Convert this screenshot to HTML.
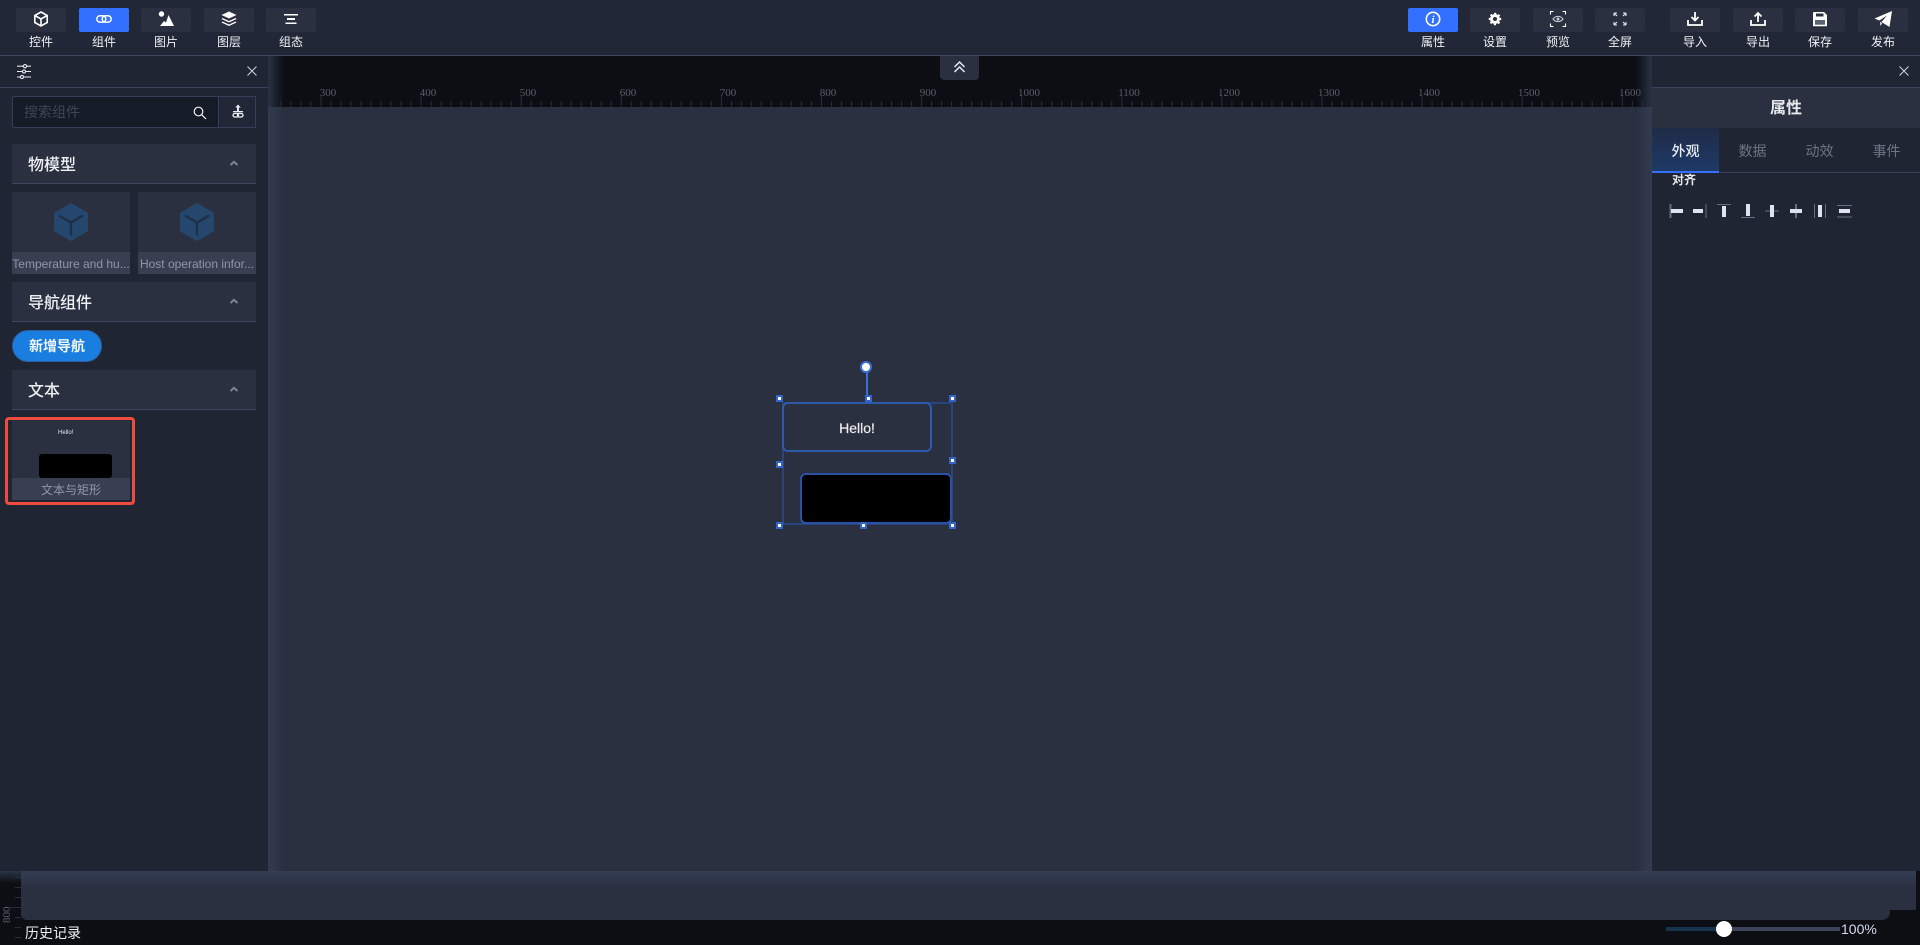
<!DOCTYPE html>
<html><head><meta charset="utf-8"><title>组态</title>
<style>
*{box-sizing:border-box;margin:0;padding:0}
html,body{width:1920px;height:945px;overflow:hidden;background:#0c0e14;font-family:"Liberation Sans","Noto Sans CJK SC",sans-serif;color:#fff}
.a{position:absolute}
#canvas{left:21px;top:107px;width:1895px;height:803px;background:#2a3040}
#canvasb{left:21px;top:900px;width:1869px;height:20px;background:#2a3040;border-radius:0 0 8px 6px}
#top{left:0;top:0;width:1920px;height:56px;background:#212736;border-bottom:1px solid #3c4760}
.btn{position:absolute;top:8px;width:50px;height:24px;background:#2a3040;border-radius:2px}
.btn.on{background:#3370ff}
.btn svg{position:absolute;left:13px;top:-1px;width:24px;height:24px}
.lb{position:absolute;top:34px;width:50px;text-align:center;font-size:12px;line-height:17px;color:#f0f2f5}
.panel{background:#1f2533;top:56px;height:815px}
.line{position:absolute;height:1px;background:#39445c}
.sec{position:absolute;left:12px;width:244px;height:40px;background:#2a3040;border-bottom:1px solid #3c4760;font-size:16px;line-height:43px;padding-left:16px;color:#eef0f4;font-weight:500}
.sec svg{position:absolute;left:217px;top:15px}
.card{position:absolute;width:118px;height:82px;background:#2a3040}
.cap{position:absolute;left:0;bottom:0;width:100%;height:22px;background:#393f50;color:#8f97ab;font-size:12px;line-height:24px;text-align:center;white-space:nowrap;overflow:hidden}
.tab{position:absolute;top:128px;width:67px;height:44px;text-align:center;font-size:14px;line-height:46px;color:#6d7482}
.h{position:absolute;width:7px;height:7px;background:#fff;border:2px solid #3565c8}
</style></head><body>

<div class="a" id="canvas"></div><div class="a" id="canvasb"></div>
<div class="a" style="left:21px;top:871px;width:1895px;height:16px;background:linear-gradient(#343e54,#2a3040)"></div>

<!-- ruler -->
<div class="a" style="left:268px;top:56px;width:1384px;height:51px;background:#0c0e14"></div>
<svg class="a" style="left:268px;top:56px" width="1384" height="51">
<defs><pattern id="r" patternUnits="userSpaceOnUse" x="52.5" y="0" width="100.1" height="51">
<rect x="0" y="40" width="1" height="11" fill="#292d39"/><rect x="10" y="45" width="1" height="6" fill="#292d39"/><rect x="20" y="45" width="1" height="6" fill="#292d39"/><rect x="30" y="45" width="1" height="6" fill="#292d39"/><rect x="40" y="45" width="1" height="6" fill="#292d39"/><rect x="50" y="45" width="1" height="6" fill="#292d39"/><rect x="60" y="45" width="1" height="6" fill="#292d39"/><rect x="70" y="45" width="1" height="6" fill="#292d39"/><rect x="80" y="45" width="1" height="6" fill="#292d39"/><rect x="90" y="45" width="1" height="6" fill="#292d39"/>
</pattern></defs>
<rect width="1384" height="51" fill="url(#r)"/>
<g font-family="'Liberation Serif',serif" font-size="11" fill="#5c5f67" text-anchor="middle">
<text x="60" y="40">300</text><text x="160" y="40">400</text><text x="260" y="40">500</text><text x="360" y="40">600</text><text x="460" y="40">700</text><text x="560" y="40">800</text><text x="660" y="40">900</text><text x="761" y="40">1000</text><text x="861" y="40">1100</text><text x="961" y="40">1200</text><text x="1061" y="40">1300</text><text x="1161" y="40">1400</text><text x="1261" y="40">1500</text><text x="1362" y="40">1600</text>
</g></svg>
<div class="a" style="left:268px;top:56px;width:16px;height:51px;background:linear-gradient(90deg,#2a3244,rgba(12,14,20,0))"></div>
<div class="a" style="left:1636px;top:56px;width:16px;height:51px;background:linear-gradient(90deg,rgba(12,14,20,0),#2a3244)"></div>
<div class="a" style="left:268px;top:107px;width:16px;height:764px;background:linear-gradient(90deg,#323b50,#2a3040)"></div>
<div class="a" style="left:1636px;top:107px;width:16px;height:764px;background:linear-gradient(90deg,#2a3040,#323b50)"></div>
<!-- left ruler ticks -->
<svg class="a" style="left:0;top:871px" width="21" height="74">
<g fill="#292d39"><rect x="15" y="6" width="6" height="1"/><rect x="15" y="16" width="6" height="1"/><rect x="15" y="26" width="6" height="1"/><rect x="10" y="36" width="11" height="1"/><rect x="15" y="46" width="6" height="1"/><rect x="15" y="56" width="6" height="1"/><rect x="15" y="66" width="6" height="1"/></g>
<text transform="translate(10,52) rotate(-90)" font-family="'Liberation Serif',serif" font-size="11" fill="#5c5f67">800</text></svg>
<div class="a" style="left:0;top:871px;width:21px;height:12px;background:linear-gradient(#2a3244,rgba(12,14,20,0))"></div>

<!-- collapse -->
<div class="a" style="left:940px;top:56px;width:39px;height:24px;background:#2a3040;border-radius:0 0 4px 4px">
<svg width="39" height="24" fill="none" stroke="#e4e8f0" stroke-width="1.5"><path d="M14.500 11l5-5 5 5M14.500 16l5-5 5 5"/></svg></div>

<!-- top bar -->
<div class="a" id="top">
<div class="btn" style="left:16px"><svg viewBox="0 0 24 24" fill="none" stroke="#fff" stroke-width="1.6"><path d="M12 5l6.200 3.500v7L12 19l-6.200-3.500v-7zM5.800 8.500L12 12l6.200-3.500M12 12v7"/></svg></div><div class="lb" style="left:16px">控件</div>
<div class="btn on" style="left:79px"><svg viewBox="0 0 24 24" fill="none" stroke="#fff" stroke-width="1.500"><rect x="4.800" y="8.800" width="9" height="6.400" rx="3.200"/><rect x="10.200" y="8.800" width="9" height="6.400" rx="3.200"/></svg></div><div class="lb" style="left:79px">组件</div>
<div class="btn" style="left:141px"><svg viewBox="0 0 24 24" fill="#fff"><circle cx="7.500" cy="7" r="2.700"/><path d="M6 19l4-5 2 1.500L14.500 8 20 19z"/></svg></div><div class="lb" style="left:141px">图片</div>
<div class="btn" style="left:204px"><svg viewBox="0 0 24 24" fill="#fff"><path d="M12 4.500l7.500 3.500L12 11.500 4.500 8z"/><path d="M5.500 11L12 14l6.500-3 1 1L12 15.500 4.500 12zM5.500 14.500L12 17.500l6.500-3 1 1L12 19 4.500 15.500z"/></svg></div><div class="lb" style="left:204px">图层</div>
<div class="btn" style="left:266px"><svg viewBox="0 0 24 24" fill="#fff"><rect x="5" y="7" width="14" height="1.500"/><rect x="8" y="11" width="8" height="2"/><rect x="6.500" y="15.500" width="11" height="1.500"/></svg></div><div class="lb" style="left:266px">组态</div>

<div class="btn on" style="left:1408px"><svg viewBox="0 0 24 24" fill="none"><circle cx="12" cy="12" r="6.700" stroke="#fff" stroke-width="1.600"/><text x="12" y="16" text-anchor="middle" font-family="'Liberation Serif',serif" font-style="italic" font-weight="700" font-size="11" fill="#fff">i</text></svg></div><div class="lb" style="left:1408px">属性</div>
<div class="btn" style="left:1470px"><svg viewBox="0 0 24 24" fill="none" stroke="#fff"><circle cx="12" cy="12" r="3.500" stroke-width="3"/><circle cx="12" cy="12" r="5.500" stroke-width="1.500" stroke-dasharray="2.160 2.160" transform="rotate(-11 12 12)"/></svg></div><div class="lb" style="left:1470px">设置</div>
<div class="btn" style="left:1533px"><svg viewBox="0 0 24 24" fill="none" stroke="#fff" stroke-width="1.100"><path d="M4.500 7.500V4.500h3M16.500 4.500h3v3M19.500 16.500v3h-3M7.500 19.500h-3v-3"/><path d="M7 12c2.500-3.500 7.500-3.500 10 0-2.500 3.500-7.500 3.500-10 0z" stroke="#c9cdd6"/><circle cx="12" cy="12" r="1.500" fill="#c9cdd6" stroke="none"/></svg></div><div class="lb" style="left:1533px">预览</div>
<div class="btn" style="left:1595px"><svg viewBox="0 0 24 24" fill="none" stroke="#e8eaf0" stroke-width="1.100"><path d="M6 6h3M6 6v3M6 6l3 3M18 6h-3M18 6v3M18 6l-3 3M6 18h3M6 18v-3M6 18l3-3M18 18h-3M18 18v-3M18 18l-3-3"/></svg></div><div class="lb" style="left:1595px">全屏</div>
<div class="btn" style="left:1670px"><svg viewBox="0 0 24 24" fill="none" stroke="#fff" stroke-width="1.800"><path d="M5 13v5h14v-5"/><path d="M12 5v8M8.500 10l3.500 3.500 3.500-3.500"/></svg></div><div class="lb" style="left:1670px">导入</div>
<div class="btn" style="left:1733px"><svg viewBox="0 0 24 24" fill="none" stroke="#fff" stroke-width="1.800"><path d="M5 13v5h14v-5"/><path d="M12 15V6M8.500 9.500L12 6l3.500 3.500"/></svg></div><div class="lb" style="left:1733px">导出</div>
<div class="btn" style="left:1795px"><svg viewBox="0 0 24 24"><path fill="#fff" d="M6 5h10l3 3v10.500a.8.8 0 01-.8.800H5.800a.8.8 0 01-.8-.800V6a1 1 0 011-1z"/><rect x="8" y="6.500" width="7.500" height="3" fill="#2a3040"/><rect x="7" y="13" width="10" height="4.700" fill="#5b6272"/></svg></div><div class="lb" style="left:1795px">保存</div>
<div class="btn" style="left:1858px"><svg viewBox="0 0 24 24"><path fill="#fff" d="M21 4L3.500 11.500l4.800 2L16 8.500l-5.500 6.500 8 5z"/><path fill="#c9ccd4" d="M9 14.500v4.500l2.500-2.800z"/></svg></div><div class="lb" style="left:1858px">发布</div>
</div>

<!-- left panel -->
<div class="a panel" style="left:0;width:268px">
<svg class="a" style="left:15px;top:8px" width="20" height="16" fill="none" stroke="#e8eaf0" stroke-width="1.100"><path d="M2 2.200h14M2 7.500h14M2 13h14"/><g fill="#1f2533"><circle cx="10" cy="2.200" r="1.600"/><circle cx="9" cy="7.500" r="1.600"/><circle cx="7" cy="13" r="1.600"/></g></svg>
<svg class="a" style="left:246px;top:9px" width="12" height="12" stroke="#c9cdd6" stroke-width="1.100"><path d="M1.500 1.500l9 9M10.500 1.500l-9 9"/></svg>
<div class="line" style="left:0;top:31px;width:268px"></div>
<div class="a" style="left:12px;top:40px;width:244px;height:32px;background:#161b28;border:1px solid #353f57;border-radius:2px"></div>
<div class="a" style="left:218px;top:40px;width:38px;height:32px;background:#212736;border:1px solid #353f57"></div>
<div class="a" style="left:24px;top:40px;font-size:14px;line-height:32px;color:#3e4556">搜索组件</div>
<svg class="a" style="left:192px;top:49px" width="16" height="16" fill="none" stroke="#f0f2f5" stroke-width="1.200"><circle cx="6.500" cy="6.500" r="4.300"/><path d="M9.700 9.700l4.300 4.300"/></svg>
<svg class="a" style="left:230px;top:47px" width="16" height="16"><path d="M8 1.500l2.800 3H9V8.500H7V4.500H5.200z" fill="#e8eaf0"/><rect x="3" y="8" width="10" height="1.300" fill="#e8eaf0"/><g fill="none" stroke="#e8eaf0" stroke-width="1.300"><rect x="3" y="10.500" width="5.500" height="3.500" rx="1.700"/><rect x="7.500" y="10.500" width="5.500" height="3.500" rx="1.700"/></g></svg>

<div class="sec" style="top:88px">物模型<svg width="10" height="8" fill="none" stroke="#7e8594" stroke-width="2"><path d="M1.500 6L5 2.800 8.500 6"/></svg></div>
<div class="card" style="left:12px;top:136px"><svg class="a" style="left:41px;top:10px" width="36" height="40"><path fill="#25476e" d="M18 1l16.500 9.500c.3.200.5.500.5.900v17.200c0 .4-.2.700-.5.900L18 39 1.500 29.500c-.3-.2-.5-.5-.5-.900V11.400c0-.4.200-.7.500-.9z"/><path fill="none" stroke="#1f2f47" stroke-width="2.300" d="M6 13.500l12 7 12-7M18 20.500v13"/></svg><div class="cap">Temperature and hu...</div></div>
<div class="card" style="left:138px;top:136px"><svg class="a" style="left:41px;top:10px" width="36" height="40"><path fill="#25476e" d="M18 1l16.500 9.500c.3.200.5.500.5.900v17.200c0 .4-.2.700-.5.900L18 39 1.500 29.500c-.3-.2-.5-.5-.5-.900V11.400c0-.4.200-.7.500-.9z"/><path fill="none" stroke="#1f2f47" stroke-width="2.300" d="M6 13.500l12 7 12-7M18 20.500v13"/></svg><div class="cap">Host operation infor...</div></div>

<div class="sec" style="top:226px">导航组件<svg width="10" height="8" fill="none" stroke="#7e8594" stroke-width="2"><path d="M1.500 6L5 2.800 8.500 6"/></svg></div>
<div class="a" style="left:12px;top:274px;width:90px;height:32px;border-radius:16px;background:#1a7de0;border:1px solid #2f5f9f;font-size:14px;font-weight:700;line-height:30px;text-align:center;color:#f2f6fc">新增导航</div>

<div class="sec" style="top:314px">文本<svg width="10" height="8" fill="none" stroke="#7e8594" stroke-width="2"><path d="M1.500 6L5 2.800 8.500 6"/></svg></div>
<div class="card" style="left:12px;top:364px;height:80px;overflow:hidden">
<div class="a" style="left:46px;top:9px;width:18px;font-size:6px;line-height:8px;color:#e5e5e5;white-space:nowrap">Hello!</div>
<div class="a" style="left:27px;top:34px;width:73px;height:24px;background:#000;border-radius:3px"></div>
<div class="cap">文本与矩形</div></div>
<div class="a" style="left:5px;top:361px;width:130px;height:88px;border:3px solid #f04c3e;border-radius:4px"></div>
</div>

<!-- right panel -->
<div class="a panel" style="left:1652px;width:268px;height:815px"></div>
<svg class="a" style="left:1898px;top:65px" width="12" height="12" stroke="#c9cdd6" stroke-width="1.100"><path d="M1.500 1.500l9 9M10.500 1.500l-9 9"/></svg>
<div class="line" style="left:1652px;top:87px;width:268px"></div>
<div class="a" style="left:1652px;top:88px;width:268px;height:40px;background:#2a3040;text-align:center;font-size:16px;font-weight:700;line-height:42px;color:#e6e8ec">属性</div>
<div class="a" style="left:1652px;top:128px;width:67px;height:44px;background:linear-gradient(#1f2b46,#1e3a68)"></div>
<div class="tab" style="left:1652px;color:#e6eaf2;font-weight:500">外观</div>
<div class="tab" style="left:1719px">数据</div>
<div class="tab" style="left:1786px">动效</div>
<div class="tab" style="left:1853px">事件</div>
<div class="line" style="left:1652px;top:172px;width:268px"></div>
<div class="a" style="left:1652px;top:171px;width:67px;height:2px;background:#3370ff"></div>
<div class="a" style="left:1672px;top:172px;font-size:12px;font-weight:700;line-height:16px;color:#e6e8ec">对齐</div>
<svg class="a" style="left:1665px;top:200px" width="190" height="22">
<g fill="#686e82"><rect x="4.500" y="4" width="2" height="14"/><rect x="40.500" y="4" width="1" height="14"/><rect x="52" y="4" width="14" height="1"/><rect x="76" y="17" width="14" height="1"/><rect x="100" y="10.500" width="14" height="1"/><rect x="130" y="4" width="2" height="14"/><rect x="149" y="4" width="1" height="14"/><rect x="160" y="4" width="1" height="14"/><rect x="172" y="5" width="15" height="1"/><rect x="172" y="16.500" width="15" height="1"/></g>
<g fill="#dfe3ee"><rect x="6" y="9" width="12" height="4"/><rect x="28" y="9" width="10" height="4"/><rect x="57" y="6" width="4" height="11"/><rect x="81" y="4" width="4" height="12"/><rect x="105" y="5" width="4" height="12"/><rect x="125" y="9" width="12" height="4"/><rect x="153" y="5" width="4" height="12"/><rect x="174" y="9" width="11" height="4"/></g>
</svg>

<!-- selected group -->
<div class="a" style="left:782px;top:402px;width:171px;height:123px;border:2px solid #27467f"></div>
<div class="a" style="left:782px;top:402px;width:150px;height:50px;border:2px solid #2e5aac;border-radius:6px;background:#2a3040;text-align:center;font:14px/48px 'Liberation Sans',sans-serif;color:#ececec;-webkit-text-stroke:.2px #ececec">Hello!</div>
<div class="a" style="left:800px;top:473px;width:152px;height:51px;background:#000;border:2px solid #2a52a4;border-radius:6px"></div>
<div class="a" style="left:865.500px;top:372px;width:2px;height:24px;background:#3b6fd8"></div>
<div class="a" style="left:860px;top:361px;width:12px;height:12px;background:#fff;border:2px solid #3b6fd8;border-radius:50%"></div>
<div class="h" style="left:776px;top:395px"></div><div class="h" style="left:865px;top:395px"></div><div class="h" style="left:949px;top:395px"></div>
<div class="h" style="left:949px;top:457px"></div><div class="h" style="left:776px;top:461px"></div>
<div class="h" style="left:776px;top:522px"></div><div class="h" style="left:860px;top:522px"></div><div class="h" style="left:949px;top:522px"></div>

<!-- bottom -->
<div class="a" style="left:25px;top:923px;font-size:14px;line-height:20px;color:#eef0f4">历史记录</div>
<div class="a" style="left:1666px;top:927px;width:174px;height:4px;background:#3b4458"></div>
<div class="a" style="left:1666px;top:927px;width:58px;height:4px;background:#17344f"></div>
<div class="a" style="left:1716px;top:921px;width:16px;height:16px;border-radius:50%;background:#fff"></div>
<div class="a" style="left:1841px;top:921px;font-size:14px;line-height:16px;color:#d3dcec">100%</div>
</body></html>
